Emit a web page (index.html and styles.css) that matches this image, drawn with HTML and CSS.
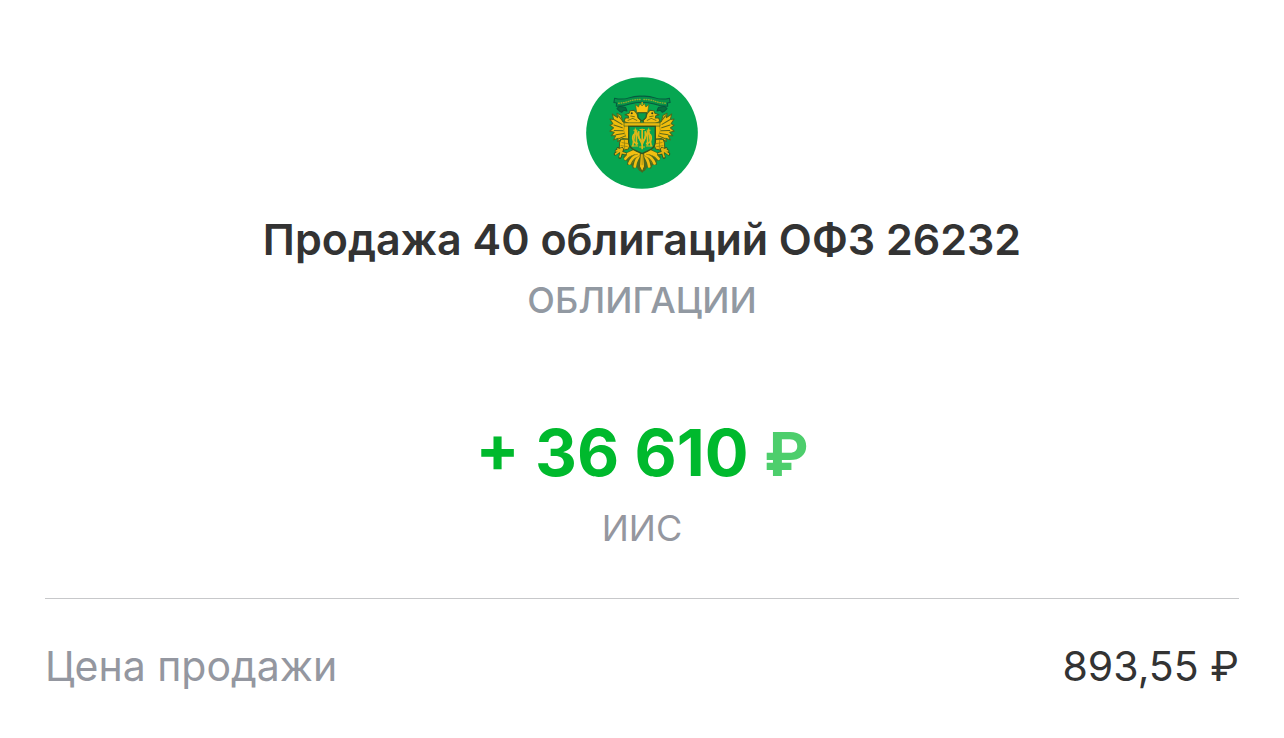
FILE: index.html
```
<!DOCTYPE html>
<html lang="ru">
<head>
  <meta charset="UTF-8">
  <meta name="viewport" content="width=device-width, initial-scale=1">
  <title>Продажа облигаций</title>
  <link rel="stylesheet" href="styles.css">
</head>
<body>

  <main class="operation">
    <header class="summary">
      <svg class="logo" viewBox="20 22 333 333" aria-hidden="true">
        <circle cx="186.500" cy="188.500" r="166" fill="#06a651"/>

        <!-- половина орла, вторая отражается -->
        <g id="half" stroke-linejoin="round" stroke-linecap="round">
          <!-- крыло -->
          <path d="M129 154 L124 136 L112 130 L114 143 L98 132 L102 148 L91 147 L100 161 L91 165 L102 173 L91 183 L104 186 L95 197 L108 197 L102 209 L116 204 L114 214 L130 205 L147 208 L148 166 Z" fill="#f0bd0c" stroke="#4a6a20" stroke-width="3"/>
          <path d="M104 149 L127 163 M103 165 L128 173 M104 181 L130 182 M109 194 L133 190 M119 205 L137 197 M116 137 L132 156" fill="none" stroke="#5b671a" stroke-width="3"/>
          <path d="M134 165 Q128 181 138 200" fill="none" stroke="#95830e" stroke-width="2"/>
          <!-- голова и шея -->
          <path d="M181 160 L149 161 L133 154 L137 144 L147 144 L146 138 L136 134 L148 130 L151 122 L163 121 L171 130 L175 143 L183 151 Z" fill="#f2bf12" stroke="#456220" stroke-width="3"/>
          <circle cx="156" cy="130" r="3" fill="#263f20"/>
          <path d="M145 151 L159 145 L171 151 M153 138 L164 140" fill="none" stroke="#7a720f" stroke-width="3"/>
          <!-- лапа -->
          <path d="M124 207 L144 206 L152 221 L146 236 L133 239 L119 233 L120 216 Z" fill="#edba0c" stroke="#456220" stroke-width="3"/>
          <path d="M127 217 L144 220 M124 226 L143 229 M134 209 L135 235" fill="none" stroke="#88790f" stroke-width="2"/>
          <path d="M127 235 L110 242 M128 236 L121 261 M127 237 L107 251 M115 235 L124 246 L138 250" fill="none" stroke="#33521f" stroke-width="9"/>
          <path d="M127 235 L110 242 M128 236 L121 259 M127 237 L108 251 M115 236 L124 246 L138 250" fill="none" stroke="#e2b510" stroke-width="5"/>
          <!-- хвост -->
          <path d="M178 246 L161 236 L144 245 L130 259 L135 271 L143 270 L142 284 L155 284 L160 295 L171 290 L178 301 L187 305 L187 246 Z" fill="#476c20"/>
          <path d="M178 247 Q151 247 137 265 M181 250 Q157 258 149 279 M183 252 Q168 266 165 288 M165 242 L145 251" fill="none" stroke="#f2bf12" stroke-width="8"/>
          <path d="M173 252 Q151 254 144 265 M178 256 Q161 266 156 279" fill="none" stroke="#8d7d10" stroke-width="2"/>
          <!-- лента -->
          <path d="M119 109 L112 116 L119 123 L126 127 L132 121 L142 123 L138 113 Z" fill="#067040" stroke="#075b3d" stroke-width="3"/>
          <path d="M187 79 Q165 78 148 84 Q127 91 105 85 L103 98 L111 99 L110 109 Q132 109 150 102 Q168 97 187 97" fill="#079149" stroke="#075a40" stroke-width="3"/>
          <path d="M117 100 Q136 99 151 93 Q168 88 184 89" fill="none" stroke="#8cae2d" stroke-width="4" stroke-dasharray="2 5"/>
        </g>
        <use href="#half" transform="translate(373 0) scale(-1 1)"/>

        <path d="M182 246 L191 246 L194 288 L187 304 L179 288 Z" fill="#f1c013" stroke="#49601c" stroke-width="3"/>
        <path d="M187 253 V284" stroke="#8d7d10" stroke-width="2"/>

        <!-- корона -->
        <path d="M171 129 L167 104 L176 111 L180 101 L187 108 L194 101 L198 111 L207 104 L203 129 Z" fill="#f8c312" stroke="#51631c" stroke-width="2"/>
        <path d="M174 128 H200 L198 143 L187 153 L175 143 Z" fill="#079d4c" stroke="#35581f" stroke-width="3"/>
        <path d="M187 96 V106" stroke="#dcb010" stroke-width="4"/>

        <!-- щит с вензелем -->
        <path d="M133 158 H240 V168 H133 Z" fill="#e9b90f" stroke="#456220" stroke-width="2"/>
        <path d="M147 169 H226 V217 Q224 233 207 240 L187 250 L166 240 Q149 233 147 217 Z" fill="#07a34f" stroke="#32551f" stroke-width="4"/>
        <g fill="none" stroke="#dcb719" stroke-width="5">
          <path d="M159 228 L167 180 L187 222 L206 180 L214 228"/>
          <path d="M170 183 V226 M203 183 V226 M187 176 V237"/>
          <path d="M170 189 Q158 193 159 205 Q161 219 175 220 M203 189 Q215 193 214 205 Q212 219 198 220"/>
          <path d="M177 183 Q174 211 187 212 Q199 211 196 183"/>
          <path d="M179 178 H195 M178 230 H195 M155 227 H175 M198 227 H218 M161 180 H173 M200 180 H212" stroke-width="3"/>
        </g>
      </svg>

      <h1 class="title">Продажа 40 облигаций ОФЗ 26232</h1>
      <p class="caption kind">ОБЛИГАЦИИ</p>
      <p class="amount">+ 36 610 <span class="currency">₽</span></p>
      <p class="caption">ИИС</p>
    </header>

    <dl class="details">
      <div class="row">
        <dt>Цена продажи</dt>
        <dd>893,55 ₽</dd>
      </div>
    </dl>
  </main>

</body>
</html>
```
FILE: styles.css
```
* {
  box-sizing: border-box;
}
body {
  margin: 0;
  background: #fff;
  color: #333;
  font-family: Inter, 'Open Sans', sans-serif;
}
h1, p, dl, dd {
  margin: 0;
}

.operation {
  padding: 77px 45px 40px;
}

/* Шапка операции */
.summary {
  display: flex;
  flex-direction: column;
  align-items: center;
  text-align: center;
}
.logo {
  width: 112px;
  height: 112px;
}
.title {
  margin-top: 25px;
  font-size: 43px;
  line-height: 50px;
  font-weight: 600;
}
.caption {
  margin-top: 14px;
  color: #95979f;
  font-size: 36px;
  line-height: 44px;
}
.kind {
  color: #9299a2;
  font-weight: 500;
}
.amount {
  margin-top: 93px;
  color: #00b92d;
  font-size: 65px;
  line-height: 76px;
  font-weight: 700;
}
.currency {
  color: #4dce6c;
  font-size: 60px;
}

/* Детали */
.details {
  margin-top: 48px;
  border-top: 1px solid #c7c8ca;
}
.row {
  display: flex;
  justify-content: space-between;
  padding-top: 42px;
  font-size: 41px;
  line-height: 50px;
}
.row dt {
  color: #9497a0;
}
```
